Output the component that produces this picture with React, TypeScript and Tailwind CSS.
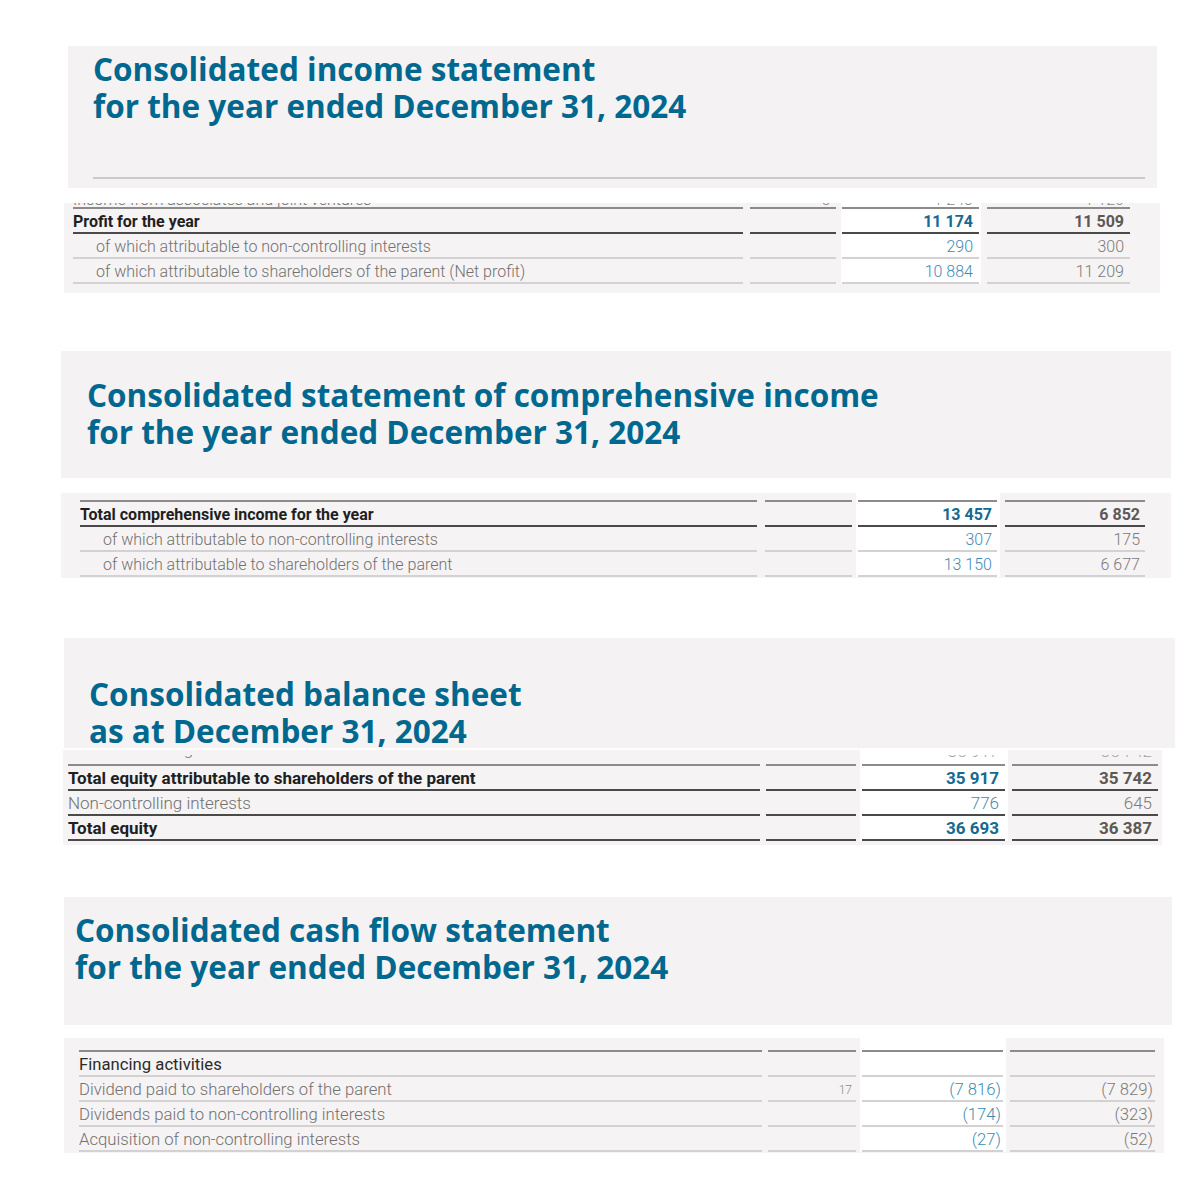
type Line = "dark" | "light";

interface Row {
  label: string;
  indent?: boolean;
  bold?: boolean;
  dark?: boolean;
  note?: string;
  cur?: string;
  prev?: string;
  line: Line;
}

interface Layout {
  table: string;
  label: string;
  note: string;
  cur: string;
  prev: string;
  text: string;
  indent: string;
  top: string;
  bottom: string;
  numPad: string;
}

interface Cut {
  gap: string;
  h: string;
  label: string;
  note: string;
  cur: string;
  prev: string;
  labelShift: string;
  numShift: string;
}

const lineCls = (l: Line) =>
  l === "dark" ? "border-b-2 border-[#4a4a4a]" : "border-b-2 border-[#d3d1d1]";

function Header({
  box,
  title,
  children,
}: {
  box: string;
  title: [string, string];
  children?: React.ReactNode;
}) {
  return (
    <div className={`bg-[#f4f2f2] ${box}`}>
      <h2 className="font-['Open_Sans',sans-serif] font-bold text-[31.5px] leading-[36.5px] text-[#00688f]">
        {title[0]}
        <br />
        {title[1]}
      </h2>
      {children}
    </div>
  );
}

function CutCell({ text, shift, cut, right }: { text: string; shift: string; cut: Cut; right?: boolean }) {
  return (
    <div className={cut.gap}>
      <div className={`${cut.h} overflow-hidden`}>
        <div className={`${shift} leading-[18px] whitespace-nowrap ${right ? "text-right" : ""}`}>{text}</div>
      </div>
    </div>
  );
}

function Table({ layout, rows, cut }: { layout: Layout; rows: Row[]; cut?: Cut }) {
  const L = layout;
  return (
    <div className={`flex bg-[#f5f3f3] font-['Roboto',sans-serif] ${L.text} ${L.table} ${L.bottom}`}>
      {/* label column */}
      <div className={`${L.label} ${L.top}`}>
        {cut && <CutCell cut={cut} shift={cut.labelShift} text={cut.label} />}
        <div className="h-[2px] bg-[#8c8a8a]" />
        {rows.map((r, i) => (
          <div
            key={i}
            className={`h-[25px] flex items-center pt-[3px] whitespace-nowrap ${lineCls(r.line)} ${
              r.indent ? L.indent : ""
            } ${
              r.bold
                ? "font-bold text-[#1f1f1f]"
                : r.dark
                ? "font-normal text-[#2b2b2b]"
                : "font-light text-[#727070]"
            }`}
          >
            {r.label}
          </div>
        ))}
      </div>
      {/* note column */}
      <div className={`${L.note} ${L.top}`}>
        {cut && <CutCell cut={cut} shift={cut.numShift} text={cut.note} right />}
        <div className="h-[2px] bg-[#8c8a8a]" />
        {rows.map((r, i) => (
          <div
            key={i}
            className={`h-[25px] flex items-center justify-end pt-[3px] pr-[4px] text-[12px] font-light text-[#8a8a8a] ${lineCls(
              r.line
            )}`}
          >
            {r.note}
          </div>
        ))}
      </div>
      {/* current year */}
      <div className={`bg-white ${L.cur} ${L.top}`}>
        {cut && <CutCell cut={cut} shift={cut.numShift} text={cut.cur} right />}
        <div className="h-[2px] bg-[#8c8a8a]" />
        {rows.map((r, i) => (
          <div
            key={i}
            className={`h-[25px] flex items-center justify-end pt-[3px] ${L.numPad} ${lineCls(r.line)} ${
              r.bold ? "font-bold text-[#17698f]" : "font-light text-[#3f8ab2]"
            }`}
          >
            {r.cur}
          </div>
        ))}
      </div>
      {/* previous year */}
      <div className={`${L.prev} ${L.top}`}>
        {cut && <CutCell cut={cut} shift={cut.numShift} text={cut.prev} right />}
        <div className="h-[2px] bg-[#8c8a8a]" />
        {rows.map((r, i) => (
          <div
            key={i}
            className={`h-[25px] flex items-center justify-end pt-[3px] ${L.numPad} ${lineCls(r.line)} ${
              r.bold ? "font-bold text-[#5e5855]" : "font-light text-[#7a7a7a]"
            }`}
          >
            {r.prev}
          </div>
        ))}
      </div>
    </div>
  );
}

const incomeRows: Row[] = [
  { label: "Profit for the year", bold: true, cur: "11 174", prev: "11 509", line: "dark" },
  { label: "of which attributable to non-controlling interests", indent: true, cur: "290", prev: "300", line: "light" },
  { label: "of which attributable to shareholders of the parent (Net profit)", indent: true, cur: "10 884", prev: "11 209", line: "light" },
];

const comprehensiveRows: Row[] = [
  { label: "Total comprehensive income for the year", bold: true, cur: "13 457", prev: "6 852", line: "dark" },
  { label: "of which attributable to non-controlling interests", indent: true, cur: "307", prev: "175", line: "light" },
  { label: "of which attributable to shareholders of the parent", indent: true, cur: "13 150", prev: "6 677", line: "light" },
];

const balanceRows: Row[] = [
  { label: "Total equity attributable to shareholders of the parent", bold: true, cur: "35 917", prev: "35 742", line: "dark" },
  { label: "Non-controlling interests", cur: "776", prev: "645", line: "dark" },
  { label: "Total equity", bold: true, cur: "36 693", prev: "36 387", line: "dark" },
];

const cashRows: Row[] = [
  { label: "Financing activities", dark: true, line: "light" },
  { label: "Dividend paid to shareholders of the parent", note: "17", cur: "(7 816)", prev: "(7 829)", line: "light" },
  { label: "Dividends paid to non-controlling interests", cur: "(174)", prev: "(323)", line: "light" },
  { label: "Acquisition of non-controlling interests", cur: "(27)", prev: "(52)", line: "light" },
];

const L1: Layout = {
  table: "ml-[64px] w-[1096px] mt-[15px]",
  label: "w-[682px] pl-[9px] pr-[3px]",
  note: "w-[95px] pl-[4px] pr-[5px]",
  cur: "w-[140px] pl-[1px] pr-[2px]",
  prev: "w-[179px] pl-[6px] pr-[30px]",
  text: "text-[16px]",
  indent: "pl-[23px]",
  top: "",
  bottom: "pb-[9px]",
  numPad: "pr-[6px]",
};

const L2: Layout = {
  table: "ml-[61px] w-[1110px] mt-[15px]",
  label: "w-[700px] pl-[19px] pr-[4px]",
  note: "w-[95px] pl-[4px] pr-[4px]",
  cur: "w-[144px] pl-[2px] pr-[3px]",
  prev: "w-[171px] pl-[5px] pr-[26px]",
  text: "text-[16px]",
  indent: "pl-[23px]",
  top: "pt-[7px]",
  bottom: "pb-[1px]",
  numPad: "pr-[5px]",
};

const L3: Layout = {
  table: "ml-[63px] w-[1099px] mt-[2px]",
  label: "w-[700px] pl-[5px] pr-[3px]",
  note: "w-[97px] pl-[3px] pr-[4px]",
  cur: "w-[148px] pl-[2px] pr-[3px]",
  prev: "w-[154px] pl-[4px] pr-[4px]",
  text: "text-[17px]",
  indent: "",
  top: "",
  bottom: "pb-[4px]",
  numPad: "pr-[6px]",
};

const L4: Layout = {
  table: "ml-[64px] w-[1100px] mt-[13px]",
  label: "w-[701px] pl-[15px] pr-[3px]",
  note: "w-[95px] pl-[3px] pr-[4px]",
  cur: "w-[146px] pl-[2px] pr-[3px]",
  prev: "w-[158px] pl-[4px] pr-[9px]",
  text: "text-[16.7px]",
  indent: "",
  top: "pt-[12px]",
  bottom: "pb-[1px]",
  numPad: "pr-[2px]",
};

const cut1: Cut = {
  gap: "",
  h: "h-[4px]",
  label: "Income from associates and joint ventures",
  note: "5",
  cur: "1 243",
  prev: "1 120",
  labelShift: "-mt-[12px] font-light text-[#6f6f6f]",
  numShift: "-mt-[12px] pr-[6px] font-light text-[#8a8a8a]",
};

const cut3: Cut = {
  gap: "pt-[5px]",
  h: "h-[9px]",
  label: "Retained earnings",
  note: "",
  cur: "35 917",
  prev: "35 742",
  labelShift: "-mt-[15px] font-light text-[#6f6f6f]",
  numShift: "-mt-[13px] pr-[6px] font-light text-[#a5a3a3]",
};

export default function App() {
  return (
    <div className="min-h-screen bg-white pt-[46px] pb-[47px]">
      <Header
        box="ml-[68px] w-[1089px] h-[142px] pt-[5px] pl-[25px]"
        title={["Consolidated income statement", "for the year ended December 31, 2024"]}
      >
        <div className="mt-[53px] w-[1052px] h-[2px] bg-[#cbc9c9]" />
      </Header>
      <Table layout={L1} rows={incomeRows} cut={cut1} />

      <div className="mt-[58px]">
        <Header
          box="ml-[61px] w-[1110px] h-[127px] pt-[26px] pl-[26px]"
          title={["Consolidated statement of comprehensive income", "for the year ended December 31, 2024"]}
        />
      </div>
      <Table layout={L2} rows={comprehensiveRows} />

      <div className="mt-[60px]">
        <Header
          box="ml-[64px] w-[1111px] h-[110px] pt-[38px] pl-[25px]"
          title={["Consolidated balance sheet", "as at December 31, 2024"]}
        />
      </div>
      <Table layout={L3} rows={balanceRows} cut={cut3} />

      <div className="mt-[52px]">
        <Header
          box="ml-[64px] w-[1108px] h-[128px] pt-[15px] pl-[11px]"
          title={["Consolidated cash flow statement", "for the year ended December 31, 2024"]}
        />
      </div>
      <Table layout={L4} rows={cashRows} />
    </div>
  );
}
